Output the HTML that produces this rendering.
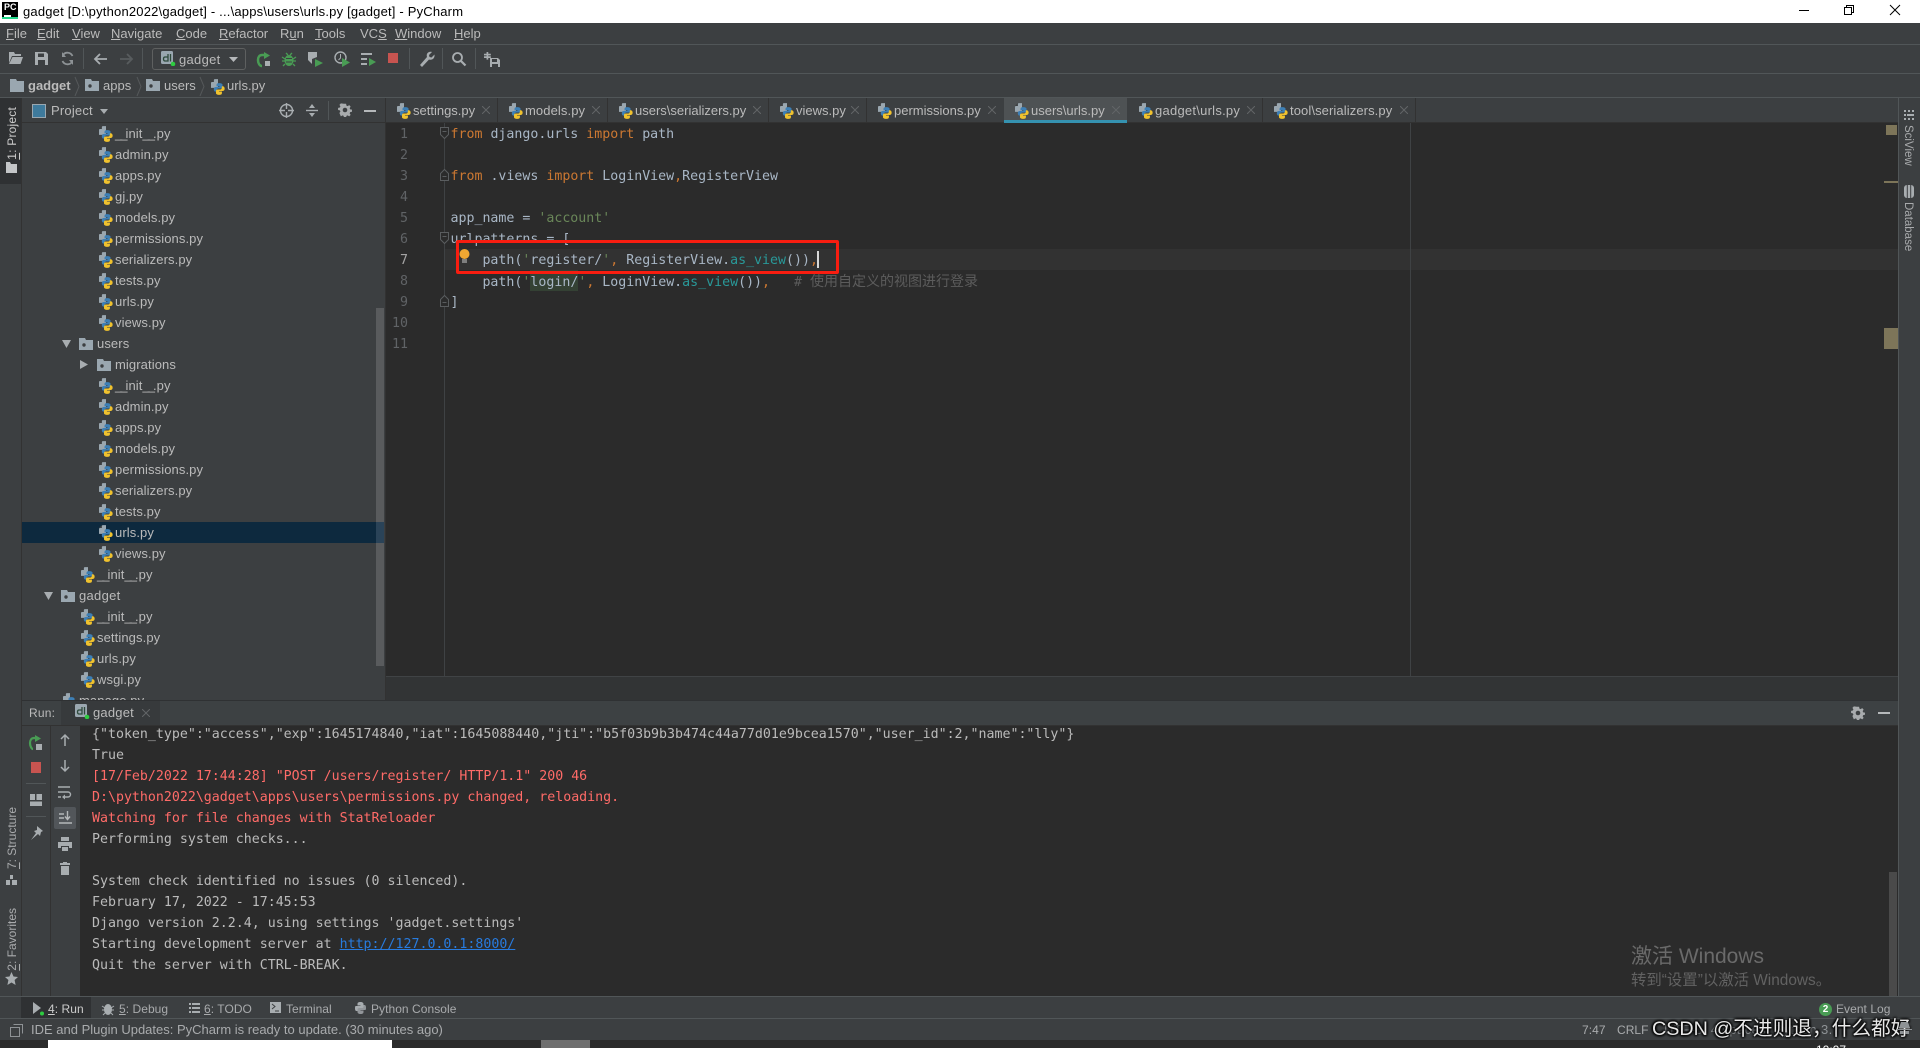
<!DOCTYPE html>
<html><head><meta charset="utf-8"><title>PyCharm</title>
<style>
html,body{margin:0;padding:0;width:1920px;height:1048px;overflow:hidden;background:#3c3f41}
body{position:relative;font-family:"Liberation Sans","Noto Sans CJK SC",sans-serif;font-size:13px;color:#bbb}
.b{position:absolute}
.t{position:absolute;white-space:pre;line-height:20px;height:20px}
.c{position:absolute;white-space:pre;line-height:21px;height:21px;font-family:"DejaVu Sans Mono","Liberation Mono","Noto Sans CJK SC",monospace;font-size:13.28px;color:#a9b7c6}
.n{position:absolute;width:30px;left:378px;text-align:right;line-height:21px;height:21px;font-family:"DejaVu Sans Mono",monospace;font-size:13.28px;color:#606366}
.o{position:absolute;white-space:pre;line-height:21px;height:21px;left:92px;font-family:"DejaVu Sans Mono","Liberation Mono",monospace;font-size:13.28px;color:#bbb}
.r{color:#ff6b68}
.k{color:#cc7832}.s{color:#6a8759}.f{color:#299999}.m{color:#5c5c5c}
svg{position:absolute;overflow:visible}
.i{width:14px;height:16px;margin-top:1px}
.v{writing-mode:vertical-rl;position:absolute;white-space:pre;font-size:12px;line-height:16px;color:#bbb}
.y{letter-spacing:-2px}
#tree .t{letter-spacing:.1px}
.e{font-size:12px;letter-spacing:.05px}
u{text-decoration:underline}
</style></head><body>
<svg width="0" height="0" style="position:absolute"><defs>
<symbol id="py" viewBox="0 0 16 18"><path d="M4 0h4v10H0V4z" fill="#9aa7b0"/><path d="M3.300 0v3.300H0z" fill="#3c3f41"/><path d="M9.300 4.500c-2 0-3 .6-3 2v1.800h3.400V9H5.300c-1.200 0-2.100 1-2.100 2.500s.8 2.800 2.100 2.800h1.200v-1.600c0-1.100.9-2 2-2h3c1 0 1.700-.8 1.700-1.700V6.500c0-1.200-1.500-2-3.900-2z" fill="#3d7fb5"/><path d="M9.500 18c2 0 3-.6 3-2v-1.800H9.100v-.7h4.400c1.200 0 2.100-1 2.100-2.500s-.8-2.800-2.100-2.800h-1.100v1.600c0 1.100-.9 2-2 2h-3c-1 0-1.700.8-1.700 1.700V16c0 1.200 1.500 2 3.800 2z" fill="#f0c22e"/></symbol>
<symbol id="pk" viewBox="0 0 14 12"><path d="M0 0h6l1 2h7v10H0z" fill="#9aa7b0"/><circle cx="5" cy="7" r="1.700" fill="#3c3f41"/></symbol>
<symbol id="dj" viewBox="0 0 15 15"><rect x="0" y="0" width="12" height="13" rx="1.500" fill="#9aa7b0"/><path d="M7 3v7H4c-1 0-1.500-.8-1.500-2s.5-2 1.500-2h3M9.500 3v7.500" stroke="#2e4a3c" stroke-width="1.300" fill="none"/><circle cx="12" cy="13" r="2.300" fill="#2ecc40"/></symbol>
<symbol id="x" viewBox="0 0 8 8"><path d="M0 0L8 8M8 0L0 8" stroke="#626567" stroke-width="1"/></symbol>
<symbol id="gear" viewBox="0 0 14 14"><path d="M5.800 0h2.400l.4 2 1.300.6 1.800-1.100 1.600 1.700-1.100 1.700.6 1.300 2 .4v2.400l-2 .4-.6 1.300 1.100 1.700-1.600 1.700-1.800-1.100-1.300.6-.4 2H5.800l-.4-2-1.300-.6-1.800 1.100L.7 10.400l1.100-1.700-.6-1.300-2-.4V4.600l2-.4.6-1.300L.7 1.200 2.300 -.5z" transform="translate(.8 .8) scale(.89)" fill="#a8abad"/><circle cx="7" cy="7" r="2.300" fill="#3c3f41"/></symbol>
</defs></svg>

<!-- title bar -->
<div class="b" style="left:0;top:0;width:1920px;height:23px;background:#fff"></div>
<div class="b" style="left:2px;top:2px;width:16px;height:17px;background:#000"></div>
<div class="b" style="left:4px;top:15px;width:7px;height:1.500px;background:#fff"></div>
<div class="b" style="left:2px;top:17px;width:16px;height:2px;background:#21d789"></div>
<div class="t" style="left:4px;top:0;font-size:9px;font-weight:bold;color:#fff;line-height:14px">PC</div>
<div class="t" style="left:23px;top:2px;color:#000;font-size:13px;letter-spacing:.19px" id="title">gadget [D:\python2022\gadget] - ...\apps\users\urls.py [gadget] - PyCharm</div>
<div class="b" style="left:1799px;top:10px;width:10px;height:1px;background:#000"></div>
<svg style="left:1844px;top:5px" width="10" height="10"><path d="M.5 2.500h7v7h-7zM2.500 2.500V.5h7v7H7.500" fill="none" stroke="#000"/></svg>
<svg style="left:1890px;top:5px" width="10" height="10"><path d="M0 0L10 10M10 0L0 10" stroke="#000"/></svg>

<!-- menu -->
<div class="t" style="left:6px;top:24px"><u>F</u>ile</div>
<div class="t" style="left:37px;top:24px"><u>E</u>dit</div>
<div class="t" style="left:72px;top:24px"><u>V</u>iew</div>
<div class="t" style="left:111px;top:24px"><u>N</u>avigate</div>
<div class="t" style="left:176px;top:24px"><u>C</u>ode</div>
<div class="t" style="left:219px;top:24px"><u>R</u>efactor</div>
<div class="t" style="left:280px;top:24px">R<u>u</u>n</div>
<div class="t" style="left:315px;top:24px"><u>T</u>ools</div>
<div class="t" style="left:360px;top:24px">VC<u>S</u></div>
<div class="t" style="left:395px;top:24px"><u>W</u>indow</div>
<div class="t" style="left:454px;top:24px"><u>H</u>elp</div>
<div class="b" style="left:0;top:44px;width:1920px;height:1px;background:#515658"></div>

<!-- toolbar -->
<svg style="left:9px;top:52px" width="14" height="13"><path d="M0 0h5l1 2h6v2H3L0 11zM3.500 5H14l-2.500 7H0z" fill="#a8adb0"/></svg>
<svg style="left:35px;top:52px" width="13" height="13"><path d="M0 0h11l2 2v11H0z M3 1.500v3.500h6V1.500zM3 8v5h7V8z" fill="#a8adb0" fill-rule="evenodd"/></svg>
<svg style="left:61px;top:52px" width="13" height="13"><path d="M11.500 4A5.500 5.500 0 0 0 2 3M1.500 9A5.500 5.500 0 0 0 11 10" fill="none" stroke="#8d9295" stroke-width="1.800"/><path d="M1 0v5h4zM12 13V8H8z" fill="#8d9295"/></svg>
<div class="b" style="left:83px;top:48px;width:1px;height:21px;background:#515658"></div>
<svg style="left:93px;top:53px" width="14" height="12"><path d="M14 6H2M7 1L2 6l5 5" fill="none" stroke="#a8adb0" stroke-width="1.800"/></svg>
<svg style="left:120px;top:53px" width="14" height="12"><path d="M0 6h12M7 1l5 5-5 5" fill="none" stroke="#585c5e" stroke-width="1.800"/></svg>
<div class="b" style="left:142px;top:48px;width:1px;height:21px;background:#515658"></div>
<div class="b" style="left:152px;top:48px;width:92px;height:20px;border:1px solid #5e6060;border-radius:3px"></div>
<svg style="left:161px;top:51px" width="15" height="15"><use href="#dj"/></svg>
<div class="t" style="left:179px;top:50px;letter-spacing:.3px">gadget</div>
<svg style="left:229px;top:57px" width="9" height="5"><path d="M0 0h9L4.500 5z" fill="#b5b8ba"/></svg>
<svg style="left:257px;top:52px" width="14" height="15"><path d="M8 3H5C2.500 3 1 5 1 8s1.500 6 4 6" fill="none" stroke="#499c54" stroke-width="2.500"/><path d="M7 0l6 3.500L7 7z" fill="#499c54"/><rect x="8" y="9" width="5" height="5" fill="#a8adb0"/></svg>
<svg style="left:282px;top:52px" width="14" height="15"><ellipse cx="7" cy="8.500" rx="4.500" ry="5.500" fill="#499c54"/><path d="M0 5l3 2M14 5l-3 2M0 9h3M14 9h-3M1 14l2-2M13 14l-2-2M4 1l2 2M10 1L8 3" stroke="#499c54" stroke-width="1.300"/><path d="M4 6.500h6M4 10h6" stroke="#3c3f41"/></svg>
<svg style="left:308px;top:52px" width="15" height="15"><path d="M0 0h9v5L4 7v5L0 8z" fill="#a8adb0"/><path d="M7 7l8 4-8 4z" fill="#499c54"/></svg>
<svg style="left:334px;top:51px" width="16" height="16"><circle cx="6.500" cy="6.500" r="5.500" fill="none" stroke="#a8adb0" stroke-width="1.400"/><path d="M6.500 3v4l-2 2" fill="none" stroke="#a8adb0"/><path d="M8 7l8 4.500L8 16z" fill="#499c54"/></svg>
<svg style="left:361px;top:52px" width="15" height="15"><path d="M0 1h11v2H0zM0 6h6v2H0zM0 11h6v2H0z" fill="#a8adb0"/><path d="M8 6l7 4-7 4z" fill="#499c54"/></svg>
<div class="b" style="left:388px;top:53px;width:10px;height:10px;background:#c75450"></div>
<div class="b" style="left:409px;top:48px;width:1px;height:21px;background:#515658"></div>
<svg style="left:419px;top:51px" width="15" height="16"><path d="M1 14L8 6c-1-3 1-6 5-5l-3 3 .5 2 2 .5 3-3c.5 4-2.500 6-5.500 5L3 16z" fill="#a8adb0"/></svg>
<div class="b" style="left:442px;top:48px;width:1px;height:21px;background:#515658"></div>
<svg style="left:452px;top:52px" width="14" height="14"><circle cx="5.500" cy="5.500" r="4.500" fill="none" stroke="#a8adb0" stroke-width="1.800"/><path d="M9 9l4.500 4.500" stroke="#a8adb0" stroke-width="2.200"/></svg>
<div class="b" style="left:475px;top:48px;width:1px;height:21px;background:#515658"></div>
<svg style="left:484px;top:52px" width="16" height="15"><path d="M3 0h2v2h3v2H5v1h3v2H5v2H3V7H0V5h3V4H0V2h3z" fill="#a8adb0" transform="scale(.85)"/><path d="M6 6h8l2 2v7H6z M8 7v3h5V7zM8 12v3h6v-3z" fill="#a8adb0" fill-rule="evenodd"/></svg>
<div class="b" style="left:0;top:73px;width:1920px;height:1px;background:#515658"></div>

<!-- nav bar -->
<svg style="left:10px;top:79px" width="14" height="13"><path d="M0 0h6l1 2h7v11H0z" fill="#9aa7b0"/></svg>
<div class="t" style="left:28px;top:76px;font-weight:bold">gadget</div>
<svg style="left:75px;top:77px" width="5" height="19"><path d="M0 0l4 9.500L0 19" fill="none" stroke="#55585a"/></svg>
<svg style="left:85px;top:79px" width="14" height="12"><use href="#pk"/></svg>
<div class="t" style="left:103px;top:76px">apps</div>
<svg style="left:137px;top:77px" width="5" height="19"><path d="M0 0l4 9.500L0 19" fill="none" stroke="#55585a"/></svg>
<svg style="left:146px;top:79px" width="14" height="12"><use href="#pk"/></svg>
<div class="t" style="left:164px;top:76px">users</div>
<svg style="left:200px;top:77px" width="5" height="19"><path d="M0 0l4 9.500L0 19" fill="none" stroke="#55585a"/></svg>
<svg class="i" style="left:211px;top:78px"><use href="#py"/></svg>
<div class="t" style="left:227px;top:76px">urls.py</div>
<div class="b" style="left:0;top:97px;width:1920px;height:1px;background:#515658"></div>

<!-- left stripe -->
<div class="b" style="left:21px;top:98px;width:1px;height:898px;background:#323232"></div>
<div class="b" style="left:0;top:98px;width:21px;height:86px;background:#2f3133"></div>
<div class="v" style="left:4px;top:107px;transform:rotate(180deg);color:#ccc;letter-spacing:.2px"><u>1</u>: Project</div>
<svg style="left:6px;top:162px" width="11" height="11"><path d="M0 0h4l1 2h6v9H0z" fill="#c4c6c8"/></svg>
<div class="v" style="left:4px;top:807px;transform:rotate(180deg);color:#a9abad"><u>7</u>: Structure</div>
<svg style="left:6px;top:875px" width="11" height="10"><path d="M4 0h3v4H4zM0 5h4v5H0zM6 5h5v5H6z" fill="#a8adb0"/></svg>
<div class="v" style="left:4px;top:908px;transform:rotate(180deg);color:#a9abad"><u>2</u>: Favorites</div>
<svg style="left:5px;top:972px" width="13" height="13"><path d="M6.500 0l2 4.500 4.500.5-3.400 3 1 5-4.100-2.500L2.400 13l1-5L0 5l4.500-.5z" fill="#a8adb0"/></svg>

<!-- project header -->
<div class="b" style="left:32px;top:104px;width:12px;height:12px;background:#3e7a9c;border:1px solid #9aa7b0"></div>
<div class="t" style="left:51px;top:101px;letter-spacing:.2px">Project</div>
<svg style="left:100px;top:109px" width="8" height="5"><path d="M0 0h8L4 5z" fill="#a8adb0"/></svg>
<svg style="left:279px;top:103px" width="15" height="15"><circle cx="7.500" cy="7.500" r="6" fill="none" stroke="#a8adb0" stroke-width="1.400"/><path d="M7.500 0v6M7.500 9v6M0 7.500h6M9 7.500h6" stroke="#a8adb0" stroke-width="1.400"/></svg>
<svg style="left:306px;top:104px" width="12" height="13"><path d="M0 6.500h12" stroke="#a8adb0" stroke-width="1.400"/><path d="M6 0l3 4H3zM6 13L3 9h6z" fill="#a8adb0"/></svg>
<div class="b" style="left:328px;top:101px;width:1px;height:19px;background:#515658"></div>
<svg style="left:338px;top:103px" width="14" height="14"><use href="#gear"/></svg>
<div class="b" style="left:364px;top:110px;width:12px;height:2px;background:#b5b8ba"></div>
<div class="b" style="left:22px;top:122px;width:363px;height:1px;background:#323232"></div>

<!-- tree -->
<div class="b" style="left:22px;top:123px;width:363px;height:577px;overflow:hidden">
<div class="b" style="left:354px;top:185px;width:8px;height:358px;background:#595b5d"></div>
<div class="b" style="left:0;top:399px;width:362px;height:21px;background:#0d293e"></div>
<div class="b" style="left:354px;top:399px;width:8px;height:21px;background:#2a4358"></div>
</div>
<div class="b" style="left:22px;top:123px;width:363px;height:577px;overflow:hidden" id="tree">
<div style="position:absolute;left:-22px;top:-122px;width:400px;height:800px">
<svg class="i" style="left:99px;top:124px"><use href="#py"/></svg><div class="t" style="left:115px;top:123px"><span class="y">__</span>init<span class="y">__</span>.py</div>
<svg class="i" style="left:99px;top:145px"><use href="#py"/></svg><div class="t" style="left:115px;top:144px">admin.py</div>
<svg class="i" style="left:99px;top:166px"><use href="#py"/></svg><div class="t" style="left:115px;top:165px">apps.py</div>
<svg class="i" style="left:99px;top:187px"><use href="#py"/></svg><div class="t" style="left:115px;top:186px">gj.py</div>
<svg class="i" style="left:99px;top:208px"><use href="#py"/></svg><div class="t" style="left:115px;top:207px">models.py</div>
<svg class="i" style="left:99px;top:229px"><use href="#py"/></svg><div class="t" style="left:115px;top:228px">permissions.py</div>
<svg class="i" style="left:99px;top:250px"><use href="#py"/></svg><div class="t" style="left:115px;top:249px">serializers.py</div>
<svg class="i" style="left:99px;top:271px"><use href="#py"/></svg><div class="t" style="left:115px;top:270px">tests.py</div>
<svg class="i" style="left:99px;top:292px"><use href="#py"/></svg><div class="t" style="left:115px;top:291px">urls.py</div>
<svg class="i" style="left:99px;top:313px"><use href="#py"/></svg><div class="t" style="left:115px;top:312px">views.py</div>
<svg style="left:62px;top:339px" width="9" height="8"><path d="M0 0h9L4.500 8z" fill="#a8adb0"/></svg>
<svg style="left:79px;top:337px" width="14" height="12"><use href="#pk"/></svg><div class="t" style="left:97px;top:333px">users</div>
<svg style="left:80px;top:359px" width="8" height="9"><path d="M0 0l8 4.500L0 9z" fill="#a8adb0"/></svg>
<svg style="left:97px;top:358px" width="14" height="12"><use href="#pk"/></svg><div class="t" style="left:115px;top:354px">migrations</div>
<svg class="i" style="left:99px;top:376px"><use href="#py"/></svg><div class="t" style="left:115px;top:375px"><span class="y">__</span>init<span class="y">__</span>.py</div>
<svg class="i" style="left:99px;top:397px"><use href="#py"/></svg><div class="t" style="left:115px;top:396px">admin.py</div>
<svg class="i" style="left:99px;top:418px"><use href="#py"/></svg><div class="t" style="left:115px;top:417px">apps.py</div>
<svg class="i" style="left:99px;top:439px"><use href="#py"/></svg><div class="t" style="left:115px;top:438px">models.py</div>
<svg class="i" style="left:99px;top:460px"><use href="#py"/></svg><div class="t" style="left:115px;top:459px">permissions.py</div>
<svg class="i" style="left:99px;top:481px"><use href="#py"/></svg><div class="t" style="left:115px;top:480px">serializers.py</div>
<svg class="i" style="left:99px;top:502px"><use href="#py"/></svg><div class="t" style="left:115px;top:501px">tests.py</div>
<svg class="i" style="left:99px;top:523px"><use href="#py"/></svg><div class="t" style="left:115px;top:522px">urls.py</div>
<svg class="i" style="left:99px;top:544px"><use href="#py"/></svg><div class="t" style="left:115px;top:543px">views.py</div>
<svg class="i" style="left:81px;top:565px"><use href="#py"/></svg><div class="t" style="left:97px;top:564px"><span class="y">__</span>init<span class="y">__</span>.py</div>
<svg style="left:44px;top:591px" width="9" height="8"><path d="M0 0h9L4.500 8z" fill="#a8adb0"/></svg>
<svg style="left:61px;top:589px" width="14" height="12"><use href="#pk"/></svg><div class="t" style="left:79px;top:585px;letter-spacing:.3px">gadget</div>
<svg class="i" style="left:81px;top:607px"><use href="#py"/></svg><div class="t" style="left:97px;top:606px"><span class="y">__</span>init<span class="y">__</span>.py</div>
<svg class="i" style="left:81px;top:628px"><use href="#py"/></svg><div class="t" style="left:97px;top:627px">settings.py</div>
<svg class="i" style="left:81px;top:649px"><use href="#py"/></svg><div class="t" style="left:97px;top:648px">urls.py</div>
<svg class="i" style="left:81px;top:670px"><use href="#py"/></svg><div class="t" style="left:97px;top:669px">wsgi.py</div>
<svg class="i" style="left:63px;top:691px"><use href="#py"/></svg><div class="t" style="left:79px;top:690px">manage.py</div>
</div></div>

<!-- tabs -->
<div class="b" style="left:385px;top:98px;width:1px;height:602px;background:#323232"></div>
<div class="b" style="left:1004px;top:98px;width:123px;height:22px;background:#4e5254"></div>
<div class="b" style="left:1004px;top:120px;width:123px;height:3px;background:#3592b0"></div>
<div class="b" style="left:386px;top:122px;width:618px;height:1px;background:#323232"></div>
<div class="b" style="left:1127px;top:122px;width:771px;height:1px;background:#323232"></div>
<div class="b" style="left:497px;top:98px;width:1px;height:24px;background:#323232"></div>
<div class="b" style="left:607px;top:98px;width:1px;height:24px;background:#323232"></div>
<div class="b" style="left:768px;top:98px;width:1px;height:24px;background:#323232"></div>
<div class="b" style="left:866px;top:98px;width:1px;height:24px;background:#323232"></div>
<div class="b" style="left:1262px;top:98px;width:1px;height:24px;background:#323232"></div>
<div class="b" style="left:1415px;top:98px;width:1px;height:24px;background:#323232"></div>
<svg class="i" style="left:397px;top:102px"><use href="#py"/></svg><div class="t" style="left:413px;top:101px">settings.py</div><svg style="left:482px;top:106px" width="8" height="8"><use href="#x"/></svg>
<svg class="i" style="left:509px;top:102px"><use href="#py"/></svg><div class="t" style="left:525px;top:101px;letter-spacing:.1px">models.py</div><svg style="left:592px;top:106px" width="8" height="8"><use href="#x"/></svg>
<svg class="i" style="left:619px;top:102px"><use href="#py"/></svg><div class="t" style="left:635px;top:101px">users\serializers.py</div><svg style="left:753px;top:106px" width="8" height="8"><use href="#x"/></svg>
<svg class="i" style="left:780px;top:102px"><use href="#py"/></svg><div class="t" style="left:796px;top:101px">views.py</div><svg style="left:851px;top:106px" width="8" height="8"><use href="#x"/></svg>
<svg class="i" style="left:878px;top:102px"><use href="#py"/></svg><div class="t" style="left:894px;top:101px">permissions.py</div><svg style="left:988px;top:106px" width="8" height="8"><use href="#x"/></svg>
<svg class="i" style="left:1015px;top:102px"><use href="#py"/></svg><div class="t" style="left:1031px;top:101px">users\urls.py</div><svg style="left:1112px;top:106px" width="8" height="8"><use href="#x"/></svg>
<svg class="i" style="left:1139px;top:102px"><use href="#py"/></svg><div class="t" style="left:1155px;top:101px;letter-spacing:.25px">gadget\urls.py</div><svg style="left:1247px;top:106px" width="8" height="8"><use href="#x"/></svg>
<svg class="i" style="left:1274px;top:102px"><use href="#py"/></svg><div class="t" style="left:1290px;top:101px;letter-spacing:.1px">tool\serializers.py</div><svg style="left:1400px;top:106px" width="8" height="8"><use href="#x"/></svg>

<!-- editor -->
<div class="b" style="left:386px;top:123px;width:1512px;height:553px;background:#2b2b2b"></div>
<div class="b" style="left:386px;top:676px;width:1512px;height:25px;background:#323435"></div>
<div class="b" style="left:386px;top:676px;width:1512px;height:1px;background:#404345"></div>
<div class="b" style="left:444px;top:249px;width:1454px;height:21px;background:#323232"></div>
<div class="b" style="left:444px;top:123px;width:1px;height:553px;background:#3f4244"></div>
<div class="b" style="left:1410px;top:123px;width:1px;height:553px;background:#3f4244"></div>
<div class="b" style="left:1886px;top:125px;width:11px;height:10px;background:#7d7559"></div>
<div class="b" style="left:1884px;top:181px;width:14px;height:2px;background:#7d7559"></div>
<div class="b" style="left:1884px;top:328px;width:14px;height:21px;background:#7d7559"></div>
<div class="n" style="top:124px">1</div><div class="n" style="top:145px">2</div><div class="n" style="top:166px">3</div><div class="n" style="top:187px">4</div><div class="n" style="top:208px">5</div><div class="n" style="top:229px">6</div><div class="n" style="top:250px;color:#a4a3a3">7</div><div class="n" style="top:271px">8</div><div class="n" style="top:292px">9</div><div class="n" style="top:313px">10</div><div class="n" style="top:334px">11</div>
<svg style="left:440px;top:127px" width="9" height="12"><path d="M.5 .5h8v7l-4 4-4-4z" fill="#2b2b2b" stroke="#5a5d5f"/><path d="M2.500 4.500h4" stroke="#5a5d5f"/></svg>
<svg style="left:440px;top:169px" width="9" height="12"><path d="M.5 11.500h8v-7l-4-4-4 4z" fill="#2b2b2b" stroke="#5a5d5f"/><path d="M2.500 7.500h4" stroke="#5a5d5f"/></svg>
<svg style="left:440px;top:232px" width="9" height="12"><path d="M.5 .5h8v7l-4 4-4-4z" fill="#2b2b2b" stroke="#5a5d5f"/><path d="M2.500 4.500h4" stroke="#5a5d5f"/></svg>
<svg style="left:440px;top:295px" width="9" height="12"><path d="M.5 11.500h8v-7l-4-4-4 4z" fill="#2b2b2b" stroke="#5a5d5f"/><path d="M2.500 7.500h4" stroke="#5a5d5f"/></svg>
<div class="b" style="left:530px;top:270px;width:48px;height:21px;background:#344134"></div>
<div class="c" style="left:450.500px;top:124px"><span class="k">from</span> django.urls <span class="k">import</span> path</div>
<div class="c" style="left:450.500px;top:166px"><span class="k">from</span> .views <span class="k">import</span> LoginView<span class="k">,</span>RegisterView</div>
<div class="c" style="left:450.500px;top:208px">app_name = <span class="s">'account'</span></div>
<div class="c" style="left:450.500px;top:229px">urlpatterns = [</div>
<div class="c" style="left:450.500px;top:250px">    path(<span class="s">'</span>register/<span class="s">'</span><span class="k">,</span> RegisterView.<span class="f">as_view</span>())<span class="k">,</span></div>
<div class="c" style="left:450.500px;top:271px">    path(<span class="s">'</span>login/<span class="s">'</span><span class="k">,</span> LoginView.<span class="f">as_view</span>())<span class="k">,</span>   <span class="m"># <span style="font-size:14px;font-family:'Noto Sans CJK SC',sans-serif">使用自定义的视图进行登录</span></span></div>
<div class="c" style="left:450.500px;top:292px">]</div>
<div class="b" style="left:817px;top:251px;width:2px;height:17px;background:#d8d8d8"></div>
<svg style="left:459px;top:249px" width="11" height="15"><circle cx="5.500" cy="5" r="5" fill="#f0a732"/><path d="M3 11h5M3 13h5" stroke="#c9c9c9" stroke-width="1"/></svg>
<div class="b" style="left:456px;top:240px;width:377px;height:28px;border:3px solid #f81d10;border-radius:2px"></div>

<!-- right stripe -->
<div class="b" style="left:1898px;top:98px;width:1px;height:898px;background:#515658"></div>
<svg style="left:1904px;top:110px" width="10" height="10"><path d="M0 0h2v2H0zM4 0h2v2H4zM8 0h2v2H8zM0 4h2v2H0zM3 4h7v2H3zM0 8h2v2H0zM4 8h2v2H4zM8 8h2v2H8z" fill="#a8adb0"/></svg>
<div class="v" style="left:1900px;top:125px;color:#a9abad;font-size:11.500px">SciView</div>
<svg style="left:1904px;top:185px" width="10" height="13"><rect width="10" height="13" rx="3" fill="#a8adb0"/><path d="M3.300 0v13M6.700 0v13" stroke="#3c3f41"/></svg>
<div class="v" style="left:1900px;top:202px;color:#a9abad;font-size:11.500px">Database</div>

<!-- run panel -->
<div class="b" style="left:22px;top:700px;width:1876px;height:1px;background:#2f3133"></div>
<div class="b" style="left:22px;top:701px;width:1876px;height:24px;background:#3d4143"></div>
<div class="b" style="left:61px;top:701px;width:99px;height:24px;background:#373a3c"></div>
<div class="t e" style="left:29px;top:703px;letter-spacing:.2px">Run:</div>
<svg style="left:75px;top:704px" width="15" height="15"><use href="#dj"/></svg>
<div class="t" style="left:93px;top:703px;letter-spacing:.2px">gadget</div>
<svg style="left:142px;top:709px" width="8" height="8"><use href="#x"/></svg>
<svg style="left:1851px;top:706px" width="14" height="14"><use href="#gear"/></svg>
<div class="b" style="left:1878px;top:712px;width:12px;height:2px;background:#b5b8ba"></div>
<div class="b" style="left:22px;top:725px;width:1876px;height:1px;background:#323232"></div>
<div class="b" style="left:50px;top:726px;width:1px;height:270px;background:#323232"></div>
<div class="b" style="left:80px;top:726px;width:1818px;height:270px;background:#2b2b2b"></div>
<div class="b" style="left:1889px;top:872px;width:8px;height:124px;background:#4a4a4a"></div>
<div class="b" style="left:26px;top:783px;width:20px;height:1px;background:#515658"></div>
<div class="b" style="left:26px;top:816px;width:20px;height:1px;background:#515658"></div>
<svg style="left:29px;top:735px" width="14" height="15"><path d="M7 3H5C2.500 3 1 5 1 8s1.500 6 3 6" fill="none" stroke="#499c54" stroke-width="2.200"/><path d="M6 0l6 3.500L6 7z" fill="#499c54"/><rect x="7" y="9" width="6" height="6" fill="#a8adb0"/></svg>
<div class="b" style="left:31px;top:762px;width:10px;height:11px;background:#c75450"></div>
<svg style="left:30px;top:794px" width="12" height="12"><path d="M0 0h5v6H0zM6.500 0H12v6H6.500zM0 7.500h12V12H0z" fill="#a8adb0"/></svg>
<svg style="left:29px;top:826px" width="14" height="14"><path d="M8 0l6 5-2 1-1 4-2-2-7 6 5-7-2-2 3-1z" fill="#a8adb0"/></svg>
<svg style="left:60px;top:734px" width="10" height="12"><path d="M5 12V1M1 5l4-4 4 4" fill="none" stroke="#a8adb0" stroke-width="1.500"/></svg>
<svg style="left:60px;top:760px" width="10" height="12"><path d="M5 0v11M1 7l4 4 4-4" fill="none" stroke="#a8adb0" stroke-width="1.500"/></svg>
<svg style="left:58px;top:786px" width="13" height="13"><path d="M0 1h12M0 6h10a2.500 2.500 0 0 1 0 5H6M0 11h3" fill="none" stroke="#a8adb0" stroke-width="1.400"/><path d="M7 8.500L4 11l3 2.500z" fill="#a8adb0"/></svg>
<div class="b" style="left:54px;top:807px;width:22px;height:22px;background:#52565a;border-radius:2px"></div>
<svg style="left:59px;top:811px" width="13" height="13"><path d="M0 3h5M0 7h5M0 12h13M8.500 0v8M6 5.500l2.500 3 2.500-3" fill="none" stroke="#b5b8ba" stroke-width="1.400"/></svg>
<svg style="left:58px;top:837px" width="14" height="14"><path d="M3 0h8v4H3zM0 5h14v6h-3v-2H3v2H0zM4 10h6v4H4z" fill="#a8adb0"/></svg>
<svg style="left:60px;top:862px" width="10" height="13"><path d="M3 0h4v1h3v2H0V1h3zM1 4h8v9H1z" fill="#a8adb0"/></svg>

<div class="o" style="top:724px">{"token_type":"access","exp":1645174840,"iat":1645088440,"jti":"b5f03b9b3b474c44a77d01e9bcea1570","user_id":2,"name":"lly"}</div>
<div class="o" style="top:745px">True</div>
<div class="o r" style="top:766px">[17/Feb/2022 17:44:28] "POST /users/register/ HTTP/1.1" 200 46</div>
<div class="o r" style="top:787px">D:\python2022\gadget\apps\users\permissions.py changed, reloading.</div>
<div class="o r" style="top:808px">Watching for file changes with StatReloader</div>
<div class="o" style="top:829px">Performing system checks...</div>
<div class="o" style="top:871px">System check identified no issues (0 silenced).</div>
<div class="o" style="top:892px">February 17, 2022 - 17:45:53</div>
<div class="o" style="top:913px">Django version 2.2.4, using settings 'gadget.settings'</div>
<div class="o" style="top:934px">Starting development server at <span style="color:#287bde;text-decoration:underline">http://127.0.0.1:8000/</span></div>
<div class="o" style="top:955px">Quit the server with CTRL-BREAK.</div>

<div class="t" style="left:1631px;top:944px;font-size:21px;line-height:26px;height:26px;color:#6a6a6a">激活 Windows</div>
<div class="t" style="left:1631px;top:971px;font-size:15.400px;color:#626262">转到“设置”以激活 Windows。</div>

<!-- bottom tool bar -->
<div class="b" style="left:0;top:996px;width:1920px;height:1px;background:#515658"></div>
<div class="b" style="left:21px;top:997px;width:70px;height:21px;background:#2f3133"></div>
<svg style="left:33px;top:1002px" width="12" height="14"><path d="M0 0l8 6-8 6z" fill="#a8adb0"/><circle cx="9" cy="11.500" r="2" fill="#2ecc40"/></svg>
<div class="t e" style="left:48px;top:999px;color:#ccc"><u>4</u>: Run</div>
<svg style="left:102px;top:1002px" width="12" height="14"><ellipse cx="6" cy="7.500" rx="4" ry="5.500" fill="#a8adb0"/><path d="M0 4l3 2M12 4L9 6M0 8h3M12 8H9M1 13l2-2M11 13l-2-2" stroke="#a8adb0"/></svg>
<div class="t e" style="left:119px;top:999px;color:#a9abad"><u>5</u>: Debug</div>
<svg style="left:189px;top:1003px" width="11" height="10"><path d="M0 0h2v2H0zM3 0h8v2H3zM0 4h2v2H0zM3 4h8v2H3zM0 8h2v2H0zM3 8h8v2H3z" fill="#a8adb0"/></svg>
<div class="t e" style="left:204px;top:999px;color:#a9abad"><u>6</u>: TODO</div>
<svg style="left:270px;top:1002px" width="11" height="11"><path d="M0 0h11v11H0z" fill="#a8adb0"/><path d="M2 2l3 2.500L2 7M5 9h4" fill="none" stroke="#3c3f41"/></svg>
<div class="t e" style="left:286px;top:999px;color:#a9abad">Terminal</div>
<svg style="left:355px;top:1002px" width="11" height="12"><path d="M5.500 0C3 0 2.500 1 2.500 2v1.500h3V4H1C0 4 0 5 0 6.500S.5 9 1.500 9h1V7.500c0-1 1-1.500 2-1.500h3c1 0 1-1 1-1.500V2c0-1-1-2-3-2z" fill="#a8adb0"/><path d="M5.500 12c2.500 0 3-1 3-2V8.500h-3V8H10c1 0 1-1 1-2.500S10.500 3 9.500 3h-1v1.500c0 1-1 1.500-2 1.500h-3c-1 0-1 1-1 1.500V10c0 1 1 2 3 2z" fill="#a8adb0" opacity=".8"/></svg>
<div class="t e" style="left:371px;top:999px;color:#a9abad">Python Console</div>
<div class="b" style="left:1819px;top:1003px;width:13px;height:13px;border-radius:50%;background:#499c54;color:#fff;font-size:10px;line-height:13px;text-align:center;font-weight:bold">2</div>
<div class="t e" style="left:1836px;top:999px;color:#a9abad">Event Log</div>

<!-- status bar -->
<div class="b" style="left:0;top:1018px;width:1920px;height:1px;background:#515658"></div>
<svg style="left:10px;top:1024px" width="13" height="13"><path d="M3.500 .5h9v9M.5 3.500h9v9h-9z" fill="none" stroke="#8e9295"/></svg>
<div class="t" style="left:31px;top:1020px;color:#a9abad">IDE and Plugin Updates: PyCharm is ready to update. (30 minutes ago)</div>
<div class="t e" style="left:1582px;top:1020px;color:#a9abad">7:47</div>
<div class="t e" style="left:1617px;top:1020px;color:#a9abad">CRLF</div>
<div class="t" style="left:1664px;top:1020px;color:#8e9295;letter-spacing:.4px">UTF-8  4 spaces  Python 3.7</div>
<div class="t" style="left:1652px;top:1015px;font-size:19.700px;line-height:28px;height:28px;color:#e8e8e8;text-shadow:1px 1px 2px #000,-1px -1px 2px #000,1px -1px 2px #000,-1px 1px 2px #000">CSDN @不进则退，什么都好</div>
<svg style="left:1897px;top:1022px" width="15" height="14"><path d="M2 6h11L11 0H4zM0 7h15v1H0zM3 9h3.500v3H3zM8.500 9H12v3H8.500z" fill="#8e9295"/></svg>

<!-- taskbar strip -->
<div class="b" style="left:0;top:1040px;width:1920px;height:8px;background:#2b2b2b;overflow:hidden">
<div class="b" style="left:48px;top:0;width:344px;height:8px;background:#fff"></div>
<div class="b" style="left:541px;top:0;width:49px;height:8px;background:#6e6e6e"></div>
<div class="t" style="left:1816px;top:3px;color:#fff;font-size:12px;line-height:14px">10:07</div>
</div>
</body></html>
